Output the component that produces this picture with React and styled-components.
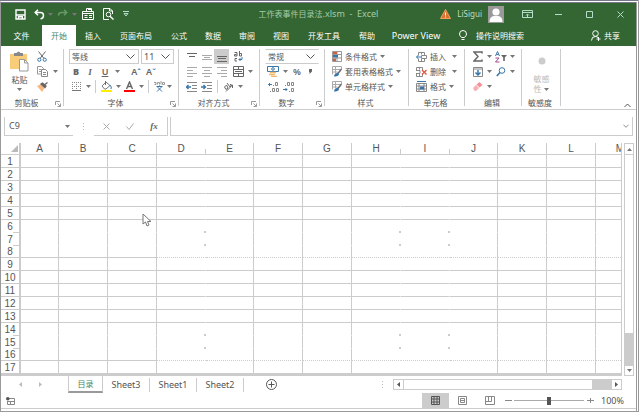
import { useState } from 'react';
import styled, { createGlobalStyle, css } from 'styled-components';

const colors = {
  green: '#336633',
  line: '#cccccc',
  lineDark: '#999999',
  text: '#555555',
  icon: '#666666',
  blue: '#3a76a8',
  orange: '#e8823c',
  white: '#ffffff',
};

const GlobalStyle = createGlobalStyle`
  * { box-sizing: border-box; }
  body {
    margin: 0;
    background: ${colors.white};
    color: ${colors.text};
    font: 8px/12px "Noto Sans", "Noto Sans CJK SC", sans-serif;
  }
  button, input, select {
    font: inherit;
    color: inherit;
    margin: 0;
    padding: 0;
    border: 0;
    background: none;
    border-radius: 0;
    outline: none;
  }
`;

const Frame = styled.div`
  position: relative;
  display: flex;
  flex-direction: column;
  min-height: 100vh;
  overflow: hidden;
  border-left: 1px solid ${colors.lineDark};
  border-right: 3px double ${colors.lineDark};
  border-bottom: 1px solid ${colors.lineDark};
  border-top: 3px double #777788;
`;

const Svg = styled.svg`
  display: block;
  flex: none;
  fill: none;
  stroke: currentColor;
  stroke-width: 1;
`;

/* ---------- title bar ---------- */

const TitleBar = styled.header`
  display: grid;
  grid-template-columns: 1fr auto 1fr;
  align-items: center;
  height: 22px;
  background: ${colors.green};
  color: ${colors.white};
`;

const QuickAccess = styled.div`
  display: flex;
  align-items: center;
  padding-left: 11px;
`;

const QuickButton = styled.button`
  display: flex;
  align-items: center;
  justify-content: center;
  width: ${(p) => p.$w || 16}px;
  height: 18px;
  margin-right: ${(p) => p.$gap || 0}px;
  color: ${(p) => (p.$dim ? '#669966' : colors.white)};
`;

const DocTitle = styled.div`
  color: #a3cca9;
  font-size: 8px;
  white-space: pre;

  span { font-size: 9px; }
`;

const WindowTools = styled.div`
  display: flex;
  align-items: center;
  justify-content: flex-end;
`;

const UserName = styled.span`
  margin: 0 6px;
  color: #c3dcc6;
  font-size: 8px;
`;

const WindowButtons = styled.div`
  display: flex;
  margin-left: 8px;
`;

const WindowButton = styled.button`
  display: flex;
  align-items: center;
  justify-content: center;
  width: 31px;
  height: 18px;
  color: #b4dcc8;
`;

/* ---------- ribbon tabs ---------- */

const TabBar = styled.nav`
  display: flex;
  height: 21px;
  background: ${colors.green};
  color: ${colors.white};
`;

const Tab = styled.button`
  width: ${(p) => p.$w || 34}px;
  height: 21px;
  line-height: 20px;
  font-size: ${(p) => (p.$latin ? 9 : 8)}px;
  text-align: center;
  white-space: nowrap;

  ${(p) => p.$active && css`
    background: ${colors.white};
    color: #448866;
  `}
`;

const TellMe = styled.label`
  display: flex;
  align-items: center;
  gap: 9px;
  flex: 1;
  padding-left: 11px;

  input {
    width: 80px;
    height: 18px;
  }
  input::placeholder { color: ${colors.white}; opacity: 1; }
`;

const Share = styled.button`
  display: flex;
  align-items: center;
  gap: 3px;
  padding-right: 16px;
`;

/* ---------- ribbon ---------- */

const Ribbon = styled.section`
  display: flex;
  height: 64px;
  border-bottom: 1px solid ${colors.line};
`;

const Group = styled.div`
  display: flex;
  flex-direction: column;
  flex: none;
  position: relative;
  width: ${(p) => p.$w}px;
  padding: 3px 0 0 ${(p) => p.$pad ?? 5}px;

  &::after {
    content: '';
    position: absolute;
    right: 0;
    top: 3px;
    bottom: 3px;
    width: 1px;
    background: ${colors.line};
  }
`;

const Row = styled.div`
  display: flex;
  align-items: center;
  height: 15px;
`;

const GroupLabel = styled.div`
  display: flex;
  align-items: center;
  height: 12px;
  margin-top: 3px;
  margin-left: -${(p) => p.$pad ?? 5}px;
  padding-right: 3px;

  span {
    flex: 1;
    text-align: center;
    padding-right: ${(p) => (p.$launcher ? 3 : 0)}px;
  }
`;

const Tool = styled.button`
  display: flex;
  align-items: center;
  justify-content: center;
  flex: none;
  width: ${(p) => p.$w || 15}px;
  height: 15px;
  margin-left: ${(p) => p.$gap || 0}px;
  color: ${(p) => (p.$pale ? '#aaaaaa' : colors.icon)};
  background: ${(p) => (p.$active ? colors.line : 'transparent')};
  font-size: 9px;
  font-weight: 600;

  i { font-family: "Liberation Serif", serif; }
  sup { color: ${colors.blue}; font-size: 8px; line-height: 4px; }
`;

const TextTool = styled.button`
  display: flex;
  align-items: center;
  align-self: flex-start;
  height: 15px;
  gap: 3px;
  min-width: ${(p) => p.$w || 0}px;
  white-space: nowrap;

  span { flex: 1; text-align: left; }
`;

const Bar = styled.i`
  width: 1px;
  height: 13px;
  margin: 0 3px;
  background: ${colors.line};
`;

const SelectWrap = styled.div`
  display: grid;
  grid-template-columns: 1fr auto;
  align-items: center;
  width: ${(p) => p.$w}px;
  height: 15px;
  margin-left: ${(p) => p.$gap || 0}px;
  padding: 0 3px 0 2px;
  border: 1px solid ${colors.line};
  ${(p) => p.$open && css`border-left-color: transparent; border-right-color: transparent;`}

  select {
    appearance: none;
    grid-area: 1 / 1 / 2 / 3;
    height: 13px;
    line-height: 13px;
    width: 100%;
    font-size: ${(p) => (p.$latin ? 9 : 8)}px;
  }
  svg { grid-area: 1 / 2; pointer-events: none; }
`;

const Clipboard = styled.div`
  display: grid;
  grid-template-columns: 27px 1fr;
  height: 45px;
`;

const BigButton = styled.button`
  display: flex;
  flex-direction: column;
  align-items: center;
  line-height: 10px;
  padding-top: ${(p) => p.$top || 0}px;
  gap: ${(p) => p.$gap || 3}px;
  height: 45px;
  color: ${(p) => (p.$dim ? '#bbbbbb' : colors.text)};
`;

const TwoLines = styled.span`
  margin-top: 6px;

  span { display: flex; align-items: center; gap: 2px; }
`;

const RibbonEnd = styled.div`
  flex: 1;
  display: flex;
  align-items: flex-end;
  justify-content: flex-end;
  padding: 0 5px 1px 0;
`;

/* ---------- formula bar ---------- */

const FormulaBar = styled.div`
  display: flex;
  align-items: stretch;
  height: 33px;
  padding: 7px 3px 7px 3px;
`;

const NameBox = styled.label`
  display: flex;
  align-items: center;
  width: 69px;
  padding: 0 3px 0 4px;
  border-left: 1px solid ${colors.line};
  border-bottom: 1px solid ${colors.line};

  input { flex: 1; min-width: 0; font-size: 9px; }
`;

const FormulaTools = styled.div`
  display: flex;
  align-items: center;
  width: 74px;
  border-right: 1px solid ${colors.line};
  border-bottom: 1px solid ${colors.line};
`;

const Dots = styled.div`
  display: flex;
  align-items: center;
  justify-content: center;
  width: 21px;
  color: #bbbbbb;
`;

const FormulaInput = styled.label`
  display: flex;
  align-items: center;
  flex: 1;
  margin-left: 2px;
  padding-right: 3px;
  border: 1px solid ${colors.line};
  border-top: 0;

  input { flex: 1; min-width: 0; }
`;

/* ---------- sheet ---------- */

const SheetArea = styled.main`
  display: flex;
  flex: 1;
`;

const GridWrap = styled.div`
  position: relative;
  flex: 1;
  min-width: 0;
  overflow: hidden;
  border-right: 1px solid ${colors.line};
  border-bottom: 3px solid ${colors.line};
`;

const Grid = styled.table`
  table-layout: fixed;
  width: 644px;
  border-collapse: separate;
  border-spacing: 0;
  font-family: "Liberation Sans", Arial, sans-serif;
  font-size: 10px;
  line-height: 11px;

  th, td { padding: 0; font-weight: 400; }
`;

/* short marks left where a grid line is not drawn */
const mark = (w, h) => css`
  background: linear-gradient(${colors.line}, ${colors.line}) right bottom / ${w}px ${h}px no-repeat border-box;
`;

const ColHead = styled.th`
  height: 12px;
  border-bottom: 1px solid ${colors.line};
  border-right: 1px solid ${(p) => (p.$open ? 'transparent' : colors.line)};
  ${(p) => p.$open && mark(1, 6)}
`;

const Corner = styled.th`
  height: 12px;
  border-bottom: 1px solid ${colors.line};
  border-right: 2px solid ${colors.line};

  svg { margin-left: auto; margin-right: 1px; }
`;

const RowHead = styled.th`
  height: ${(p) => p.$h}px;
  border-right: 2px solid ${colors.line};
  border-bottom: ${(p) => (p.$last ? 0 : 1)}px solid ${(p) => (p.$open ? 'transparent' : colors.line)};
  ${(p) => p.$open && mark(8, 1)}
`;

const Cell = styled.td`
  height: ${(p) => p.$h}px;
  border-right: 1px solid ${(p) => (p.$openX ? 'transparent' : colors.line)};
  border-bottom: ${(p) => (p.$last ? 0 : 1)}px
    ${(p) => (p.$dotted ? 'dotted' : 'solid')}
    ${(p) => (p.$openY ? 'transparent' : colors.line)};
  ${(p) => p.$openX && p.$openY && mark(2, 2)}
`;

const Pointer = styled(Svg)`
  position: absolute;
  left: 141px;
  top: 70px;
`;

const VScroll = styled.div`
  display: flex;
  flex-direction: column;
  width: 10px;
  margin: 0 2px;
  border: 1px solid ${colors.line};
`;

const ScrollButton = styled.button`
  display: flex;
  align-items: center;
  justify-content: center;
  width: ${(p) => p.$w || 8}px;
  height: ${(p) => p.$h || 9}px;
  border: 0 solid ${colors.line};
  border-width: ${(p) => p.$edge};
`;

const Track = styled.div`
  flex: 1;
`;

const Thumb = styled.div`
  width: ${(p) => p.$w}px;
  height: ${(p) => p.$h}px;
  background: ${colors.line};
`;

/* ---------- sheet tabs ---------- */

const SheetBar = styled.div`
  display: flex;
  align-items: center;
  height: 17px;
  padding-right: 14px;
`;

const SheetNav = styled.button`
  display: flex;
  justify-content: center;
  width: 20px;
  margin-left: ${(p) => p.$gap || 0}px;
  color: #bbbbbb;
`;

const SheetTab = styled.button`
  width: 47px;
  height: 14px;
  border-right: 1px solid ${colors.line};
  font-size: 9px;

  ${(p) => p.$active && css`
    width: 35px;
    height: 17px;
    margin-left: 18px;
    border-left: 1px solid ${colors.line};
    border-bottom: 2px solid ${colors.lineDark};
    color: #448866;
    font-size: 8px;
  `}
`;

const AddSheet = styled.button`
  margin-left: 22px;
`;

const HScroll = styled.div`
  display: flex;
  width: 229px;
  height: 11px;
  border: 1px solid ${colors.line};
`;

/* ---------- status bar ---------- */

const StatusBar = styled.footer`
  display: flex;
  align-items: center;
  height: 16px;
  margin-bottom: 2px;
  padding: 0 12px 0 5px;
  border-bottom: 1px solid ${colors.line};
`;

const Spacer = styled.div`
  flex: 1;
`;

const ViewButton = styled.button`
  display: flex;
  align-items: center;
  justify-content: center;
  width: 27px;
  height: 15px;
  background: ${(p) => (p.$active ? colors.line : 'transparent')};
`;

const ZoomStep = styled.button`
  width: 10px;
  height: 12px;
  display: flex;
  align-items: center;
  justify-content: center;
  color: #888888;
`;

const ZoomRange = styled.input`
  appearance: none;
  width: 70px;
  height: 9px;
  margin: 0 1px;
  background: linear-gradient(#aaaaaa, #aaaaaa) center / 100% 1px no-repeat;

  &::-webkit-slider-thumb {
    appearance: none;
    width: 4px;
    height: 8px;
    background: ${colors.text};
  }
`;

const ZoomValue = styled.output`
  width: 29px;
  text-align: right;
  font-size: 9px;
`;

/* ---------- icons ---------- */

const Caret = ({ up }) => (
  <Svg width="5" height="3" viewBox="0 0 5 3">
    <path d={up ? 'M0 3h5L2.5 0z' : 'M0 0h5L2.5 3z'} fill="#777" stroke="none" />
  </Svg>
);

const DropCaret = ({ w = 8, label }) => (
  <Tool type="button" $w={w} aria-label={label}>
    <Caret />
  </Tool>
);

const Chevron = ({ size = 9 }) => (
  <Svg width={size} height={size} viewBox="0 0 9 9"><path d="M.5 2.5l4 4 4-4" /></Svg>
);

const Launcher = () => (
  <Svg width="6" height="7" viewBox="0 0 6 7">
    <path d="M.5 5V1.500H5M2.500 3.500l3 3M5.500 3.500v3h-3" stroke="#999" />
  </Svg>
);

const SaveIcon = () => (
  <Svg width="11" height="11" viewBox="0 0 11 11">
    <path d="M1 1h9v9H1zM1 6h9M3.500 10V7.800h3.800V10" strokeWidth="1.400" />
  </Svg>
);

const UndoIcon = ({ flip }) => (
  <Svg width="11" height="11" viewBox="0 0 11 11">
    <path
      strokeWidth="1.500"
      d={flip ? 'M7 .8l2.800 2.700L7 6.200M9.500 3.500H4.500Q1.500 3.500 1.500 6.500'
        : 'M4 .8L1.200 3.500 4 6.200M1.500 3.500h5Q9.500 3.500 9.500 6.500T6.500 9.800'}
    />
  </Svg>
);

const FormIcon = () => (
  <Svg width="12" height="12" viewBox="0 0 12 12">
    <path d="M.5 3.500h11v8H.500zM.5 5.500h11M2.500 7.500h3M7 7.500h3M2.500 9.500h3M7 9.500h3M4.500 3V.500h5V3M6 1.500h3" />
  </Svg>
);

const PreviewIcon = () => (
  <Svg width="11" height="12" viewBox="0 0 11 12">
    <path d="M9.500 6V3L7 .500H.500v11H6M6.500.5V3h3" />
    <circle cx="5.500" cy="6.500" r="2.300" />
    <path d="M7 8.200l3.500 3.300" strokeWidth="1.500" />
  </Svg>
);

const WarningIcon = () => (
  <Svg width="11" height="10" viewBox="0 0 11 10">
    <path d="M5.500.5l5 9H.500z" fill="#d9732e" stroke="#f0a060" />
    <path d="M5.500 3.500v3M5.500 7.500v1" stroke="#fff" />
  </Svg>
);

const Avatar = () => (
  <Svg width="16" height="17" viewBox="0 0 16 17">
    <path d="M0 0h16v17H0z" fill="#999" stroke="none" />
    <circle cx="8" cy="6" r="3.600" fill="#fff" stroke="none" />
    <path d="M1.500 16q0-5.500 4.500-6h4q4.500.5 4.500 6z" fill="#fff" stroke="none" />
  </Svg>
);

const PasteIcon = () => (
  <Svg width="19" height="21" viewBox="0 0 19 21">
    <path d="M0 3h17v15H0z" fill="#f9cc7a" stroke="none" />
    <path d="M4 2h2.500Q8.500-1 10.500 2H13v3H4z" fill="#888" stroke="none" />
    <path d="M9.500 8.500h5l3.500 3.500v8H9.500z" fill="#fff" stroke="#999" />
    <path d="M14.500 8.500V12H18" stroke="#999" />
  </Svg>
);

const CutIcon = () => (
  <Svg width="10" height="11" viewBox="0 0 10 11">
    <path d="M1.500.5l5.500 7M8.500.5L3 7.500" stroke="#666" />
    <circle cx="2.300" cy="8.700" r="1.600" stroke={colors.blue} />
    <circle cx="7.700" cy="8.700" r="1.600" stroke={colors.blue} />
  </Svg>
);

const CopyIcon = () => (
  <Svg width="11" height="11" viewBox="0 0 11 11">
    <path d="M.5.5h4l2 2v5.500h-6zM2 3.500h2M2 5.500h2" stroke="#999" />
    <path d="M4.500 3.500h4l2 2v5h-6z" fill="#fff" stroke="#888" />
    <path d="M6 6.500h3M6 8.500h3" stroke="#888" />
  </Svg>
);

const PainterIcon = () => (
  <Svg width="11" height="10" viewBox="0 0 11 10">
    <path d="M0 4l4-2 4 3.500-3 4.500z" fill="#f7b980" stroke="none" />
    <path d="M4 2l1.500-1 3.500 3-1 1.500zM8 2.500L10.500.500" fill="#666" strokeWidth="1.300" />
  </Svg>
);

const BordersIcon = () => (
  <Svg width="9" height="9" viewBox="0 0 9 9">
    <path d="M0 .5h9M.5 0v8M8.500 0v8M4.500 0v8M0 4.500h9" strokeDasharray="1 1" stroke="#888" />
    <path d="M0 8.500h9" stroke="#777" />
  </Svg>
);

const FillIcon = () => (
  <Svg width="11" height="11" viewBox="0 0 11 11">
    <path d="M1 5l4-4 4 3.500-4 3.500H3.500z" fill="#fff" stroke="#777" />
    <path d="M4.500 0v4M9 4q2 2 1 4" stroke={colors.blue} />
    <path d="M0 9h11v2H0z" fill="#ffee00" stroke="none" />
  </Svg>
);

const FontColorIcon = () => (
  <Svg width="11" height="11" viewBox="0 0 11 11">
    <path d="M2.500 8l3-7 3 7M3.500 5.500h4" strokeWidth="1.400" />
    <path d="M0 9h11v2H0z" fill="#ff0000" stroke="none" />
  </Svg>
);

const PhoneticIcon = () => (
  <Svg width="11" height="11" viewBox="0 0 11 11">
    <path d="M0 1.500h2v2H.500M3.500 3.500v-2h2v2M7 0v3.500M8.500 1.500h2v2h-2z" stroke="#999" />
    <path d="M2.500 5.500h6M5.500 4.500v1M3.500 6l4.500 4.500M7.500 6L3 10.500" stroke={colors.blue} />
  </Svg>
);

const LinesIcon = ({ d }) => (
  <Svg width="10" height="10" viewBox="0 0 10 10"><path d={d} /></Svg>
);

const WrapIcon = () => (
  <Svg width="9" height="11" viewBox="0 0 9 11">
    <path d="M.5 1.500h2.500v3.500h-2.500V3.500h2M5.500 0v5h2V2.500h-2M3 7.500H1v2.500h2" />
    <path d="M8 6v2.500H5M6.500 7L5 8.500 6.500 10" stroke={colors.blue} />
  </Svg>
);

const MergeIcon = () => (
  <Svg width="11" height="11" viewBox="0 0 11 11">
    <path d="M.5.5h10v10H.500zM.5 3.500h10M.5 7.500h10M5.500.5v3M5.500 7.500v3M2 5.500h7" />
  </Svg>
);

const IndentIcon = ({ right }) => (
  <Svg width="11" height="10" viewBox="0 0 11 10">
    <path d="M1 .5h10M6 3.500h5M6 6.500h5M1 9.500h10" stroke="#888" />
    <path d={right ? 'M0 5h4M2.500 3l2 2-2 2' : 'M5 5H1M2.500 3l-2 2 2 2'} stroke={colors.blue} strokeWidth="1.400" />
  </Svg>
);

const OrientIcon = () => (
  <Svg width="11" height="10" viewBox="0 0 11 10">
    <path d="M1.500 5l2-2 1.500 3-2 1.500zM4 1l3 4 1.500-1.500L7 2M3 9.500L9.500 3M9.500 6V3H7" />
  </Svg>
);

const CurrencyIcon = () => (
  <Svg width="12" height="11" viewBox="0 0 12 11">
    <path d="M.5.5h11v5H.500z" stroke={colors.blue} />
    <circle cx="6" cy="3" r="1.300" stroke={colors.blue} />
    <path d="M3 6.500h6M2 8.500h6M4 10.500h6" stroke="#f3b76c" strokeWidth="1.500" />
  </Svg>
);

const DecimalIcon = ({ dec }) => (
  <Svg width="11" height="10" viewBox="0 0 11 10">
    <path
      d={dec ? 'M4.500.5h2v3h-2zM8.500.5h2v3h-2zM2 3.500h1M8.500 6.500h2v3h-2zM6 9.500h1'
        : 'M7.500.5h2v3h-2zM5 3.500h1M4.500 6.500h2v3h-2zM8.500 6.500h2v3h-2zM2 9.500h1'}
      stroke="#888"
    />
    <path d={dec ? 'M0 7.500h4M2.500 6L4 7.500 2.500 9' : 'M4 2.500H.500M2 1L.500 2.500 2 4'} stroke={colors.blue} />
  </Svg>
);

const CondIcon = () => (
  <Svg width="10" height="11" viewBox="0 0 10 11">
    <path d="M.5.5h9v10h-9zM.5 3.500h9M.5 7h9M5 .5v10" stroke="#999" />
    <path d="M1 1h4v2H1zM1 7.500h3v2.500H1z" fill="#d06040" stroke="none" />
    <path d="M1 4h5v2.500H1z" fill={colors.blue} stroke="none" />
  </Svg>
);

const StyleIcon = () => (
  <Svg width="10" height="11" viewBox="0 0 10 11">
    <path d="M.5 8.500v-8h9V3M.5 3.500H8M.5 6h5M3.500.5v7" stroke="#aaa" />
    <path d="M9.500 3L6 7.500" stroke="#666" strokeWidth="1.500" />
    <path d="M2 10.500q0-3 4-4l1 2q-1 2-5 2z" fill={colors.blue} stroke="none" />
  </Svg>
);

const InsertIcon = () => (
  <Svg width="11" height="10" viewBox="0 0 11 10">
    <path d="M2.500 3V.500h6V3M2.500 7v2.500h6V7M5.500.5v2M5.500 7v2.500M5.500 3.500h5v3h-5z" stroke="#888" />
    <path d="M5 5H.500M2.500 3l-2 2 2 2" stroke={colors.blue} />
  </Svg>
);

const DeleteIcon = () => (
  <Svg width="11" height="10" viewBox="0 0 11 10">
    <path d="M.5 3V.500h6V3M.5 7v2.500h6V7M3.500.5v2M3.500 7v2.500M0 3.500h4v3H0" stroke="#888" />
    <path d="M6 3l4.500 4.500M10.500 3L6 7.500" stroke="#dd5544" strokeWidth="1.400" />
  </Svg>
);

const FormatIcon = () => (
  <Svg width="11" height="11" viewBox="0 0 11 11">
    <path d="M.5 2.500h10v8H.500zM3 2.500v8M8 2.500v8M.5 5h10M.5 8h10" stroke="#888" />
    <path d="M1 .5h9" stroke={colors.blue} />
    <path d="M4 5.500h4v3H4z" fill={colors.blue} stroke="none" />
  </Svg>
);

const SumIcon = () => (
  <Svg width="10" height="11" viewBox="0 0 10 11">
    <path d="M9 2.500V1H1l4 4.500L1 10h8V8.500" strokeWidth="1.500" />
  </Svg>
);

const SortIcon = () => (
  <Svg width="12" height="12" viewBox="0 0 12 12">
    <path d="M.5 5L2.500.500 4.500 5M1.500 3.500h2" stroke={colors.blue} />
    <path d="M.5 7h3.500l-3.500 4H4.500" stroke="#a04c90" />
    <path d="M6 4h6L9.800 6.500V10H8.200V6.500z" fill="#666" stroke="none" />
  </Svg>
);

const FillDownIcon = () => (
  <Svg width="10" height="10" viewBox="0 0 10 10">
    <path d="M.5.5h9v9h-9zM.5 2h9" stroke="#888" />
    <path d="M5 3v5M2.500 5.500L5 8l2.500-2.500" stroke={colors.blue} strokeWidth="1.500" />
  </Svg>
);

const FindIcon = () => (
  <Svg width="10" height="10" viewBox="0 0 10 10">
    <circle cx="6" cy="3.500" r="2.800" stroke={colors.blue} />
    <path d="M4 5.500L.8 9" stroke={colors.blue} strokeWidth="1.600" />
  </Svg>
);

const EraserIcon = () => (
  <Svg width="10" height="9" viewBox="0 0 10 9">
    <path d="M0 6l3-3 3 3-3 3H1.500z" fill="#f9b0b4" stroke="none" />
    <path d="M3.500 2.500L6.500 0 9.500 3 6.500 5.500z" fill="#f79096" stroke="none" />
  </Svg>
);

const Triangle = ({ right }) => (
  <Svg width="3" height="5" viewBox="0 0 3 5">
    <path d={right ? 'M0 0v5l3-2.500z' : 'M3 0v5L0 2.500z'} fill="currentColor" stroke="none" />
  </Svg>
);

/* ---------- data ---------- */

const tabs = [
  { label: '文件', w: 41 },
  { label: '开始' },
  { label: '插入' },
  { label: '页面布局', w: 52 },
  { label: '公式' },
  { label: '数据' },
  { label: '审阅' },
  { label: '视图' },
  { label: '开发工具', w: 52 },
  { label: '帮助' },
  { label: 'Power View', w: 64, latin: true },
];

const columns = [
  { name: 'A', w: 38 },
  { name: 'B', w: 49 },
  { name: 'C', w: 49 },
  { name: 'D', w: 49, open: true },
  { name: 'E', w: 48 },
  { name: 'F', w: 49 },
  { name: 'G', w: 49 },
  { name: 'H', w: 49, open: true },
  { name: 'I', w: 49, open: true },
  { name: 'J', w: 48 },
  { name: 'K', w: 49 },
  { name: 'L', w: 49 },
  { name: 'M', w: 49 },
];

const rows = Array.from({ length: 17 }, (_, i) => i + 1).map((n) => ({
  n,
  h: [8, 16, 17].includes(n) ? 12 : 13,
  open: [6, 7, 14, 15].includes(n),
  dotted: n === 8 || n === 16,
  last: n === 17,
}));

const sheets = ['目录', 'Sheet3', 'Sheet1', 'Sheet2'];

const alignTop = [
  { label: '顶端对齐', d: 'M0 1.500h10M2 4.500h6' },
  { label: '垂直居中', d: 'M0 3.500h10M2 5.500h6M0 7.500h10', pale: true },
  { label: '底端对齐', d: 'M0 4.500h10M1 6.500h8M0 9.500h10' },
];

const alignSide = [
  { label: '左对齐', d: 'M0 .5h10M0 3.500h6M0 6.500h10M0 9.500h6' },
  { label: '居中', d: 'M0 .5h10M2 3.500h6M0 6.500h10M2 9.500h6' },
  { label: '右对齐', d: 'M0 .5h10M4 3.500h6M0 6.500h10M4 9.500h6' },
];

function Label({ children, pad, launcher }) {
  return (
    <GroupLabel $pad={pad} $launcher={launcher}>
      <span>{children}</span>
      {launcher ? <Launcher /> : null}
    </GroupLabel>
  );
}

export default function App() {
  const [tab, setTab] = useState('开始');
  const [sheet, setSheet] = useState('目录');
  const [zoom, setZoom] = useState(100);

  return (
    <>
      <GlobalStyle />
      <Frame>
        <TitleBar>
          <QuickAccess>
            <QuickButton $w={17} $gap={2} aria-label="保存"><SaveIcon /></QuickButton>
            <QuickButton aria-label="撤消"><UndoIcon /></QuickButton>
            <QuickButton $w={7} aria-label="撤消列表"><Caret /></QuickButton>
            <QuickButton $dim $gap={1} aria-label="恢复"><UndoIcon flip /></QuickButton>
            <QuickButton $w={7} $dim $gap={1} aria-label="恢复列表"><Caret /></QuickButton>
            <QuickButton $w={17} $gap={4} aria-label="表单"><FormIcon /></QuickButton>
            <QuickButton $w={17} $gap={5} aria-label="打印预览"><PreviewIcon /></QuickButton>
            <QuickButton $w={7} aria-label="自定义">
              <Svg width="6" height="6" viewBox="0 0 6 6"><path d="M0 .5h6M1 2.500h4L3 5z" stroke="#b4dcc8" /></Svg>
            </QuickButton>
          </QuickAccess>
          <DocTitle>工作表事件目录法<span>.xlsm  -  Excel</span></DocTitle>
          <WindowTools>
            <WarningIcon />
            <UserName>LiSigui</UserName>
            <Avatar />
            <WindowButtons>
              <WindowButton aria-label="功能区显示选项">
                <Svg width="11" height="8" viewBox="0 0 11 8"><path d="M.5.5h10v7H.500zM.5 2.500h10M5.500 7V4M4 5.500L5.500 4 7 5.500" /></Svg>
              </WindowButton>
              <WindowButton aria-label="最小化">
                <Svg width="7" height="7" viewBox="0 0 7 7"><path d="M0 3.500h7" /></Svg>
              </WindowButton>
              <WindowButton aria-label="最大化">
                <Svg width="7" height="7" viewBox="0 0 7 7"><path d="M.5.5h6v6h-6z" /></Svg>
              </WindowButton>
              <WindowButton aria-label="关闭">
                <Svg width="7" height="7" viewBox="0 0 7 7"><path d="M.5.5l6 6M6.500.5l-6 6" /></Svg>
              </WindowButton>
            </WindowButtons>
          </WindowTools>
        </TitleBar>

        <TabBar>
          {tabs.map((t) => (
            <Tab key={t.label} type="button" $w={t.w} $latin={t.latin} $active={t.label === tab} onClick={() => setTab(t.label)}>
              {t.label}
            </Tab>
          ))}
          <TellMe>
            <Svg width="8" height="11" viewBox="0 0 8 11">
              <path d="M2.500 7.500Q.500 5.500.500 4a3.500 3.500 0 0 1 7 0Q7.500 5.500 5.500 7.500zM2.500 9.500h3" />
            </Svg>
            <input type="text" placeholder="操作说明搜索" aria-label="操作说明搜索" />
          </TellMe>
          <Share type="button">
            <Svg width="10" height="11" viewBox="0 0 10 11">
              <circle cx="4.500" cy="3.500" r="2.800" />
              <path d="M.5 10.500q0-4 4-4 1.500 0 2.500 1M5.500 9h4M7.500 7v4" />
            </Svg>
            共享
          </Share>
        </TabBar>

        <Ribbon>
          <Group $w={63}>
            <Clipboard>
              <BigButton type="button" $top={2}>
                <PasteIcon />
                粘贴
                <Caret />
              </BigButton>
              <div>
                <Row><Tool aria-label="剪切" $w={18}><CutIcon /></Tool></Row>
                <Row><Tool aria-label="复制" $w={18}><CopyIcon /></Tool><DropCaret label="复制选项" /></Row>
                <Row><Tool aria-label="格式刷" $w={18}><PainterIcon /></Tool></Row>
              </div>
            </Clipboard>
            <Label launcher>剪贴板</Label>
          </Group>

          <Group $w={115}>
            <Row>
              <SelectWrap $w={70}>
                <select aria-label="字体"><option>等线</option></select>
                <Chevron />
              </SelectWrap>
              <SelectWrap $w={33} $gap={2} $latin>
                <select aria-label="字号"><option>11</option></select>
                <Chevron />
              </SelectWrap>
            </Row>
            <Row>
              <Tool type="button" $w={14}><b>B</b></Tool>
              <Tool type="button" $w={14}><i>I</i></Tool>
              <Tool type="button" $w={16}><u>U</u></Tool>
              <DropCaret label="下划线选项" />
              <Tool type="button" $w={16} $gap={7}>A<sup>ˆ</sup></Tool>
              <Tool type="button" $w={14}>A<sup>ˇ</sup></Tool>
            </Row>
            <Row>
              <Tool aria-label="边框"><BordersIcon /></Tool>
              <DropCaret label="边框选项" />
              <Bar />
              <Tool aria-label="填充颜色"><FillIcon /></Tool>
              <DropCaret label="填充选项" />
              <Tool aria-label="字体颜色"><FontColorIcon /></Tool>
              <DropCaret label="颜色选项" />
              <Bar />
              <Tool aria-label="拼音"><PhoneticIcon /></Tool>
              <DropCaret w={5} label="拼音选项" />
            </Row>
            <Label launcher>字体</Label>
          </Group>

          <Group $w={81}>
            <Row>
              {alignTop.map((a, i) => (
                <Tool key={a.label} aria-label={a.label} $pale={a.pale} $active={i === 2}><LinesIcon d={a.d} /></Tool>
              ))}
              <Tool aria-label="自动换行" $gap={2}><WrapIcon /></Tool>
            </Row>
            <Row>
              {alignSide.map((a) => (
                <Tool key={a.label} aria-label={a.label} $pale><LinesIcon d={a.d} /></Tool>
              ))}
              <Tool aria-label="合并后居中" $gap={2}><MergeIcon /></Tool>
              <DropCaret label="合并选项" />
            </Row>
            <Row>
              <Tool aria-label="减少缩进"><IndentIcon /></Tool>
              <Tool aria-label="增加缩进"><IndentIcon right /></Tool>
              <Bar />
              <Tool aria-label="方向"><OrientIcon /></Tool>
              <DropCaret label="方向选项" />
            </Row>
            <Label launcher>对齐方式</Label>
          </Group>

          <Group $w={65}>
            <Row>
              <SelectWrap $w={54} $open>
                <select aria-label="数字格式"><option>常规</option></select>
                <Chevron />
              </SelectWrap>
            </Row>
            <Row>
              <Tool aria-label="会计数字格式" $w={16}><CurrencyIcon /></Tool>
              <DropCaret label="货币选项" />
              <Tool type="button" $w={16}>%</Tool>
              <Tool type="button" $w={10} aria-label="千位分隔样式">
                <Svg width="4" height="5" viewBox="0 0 4 5"><path d="M1 0h3v2.500L1.500 5V3H1z" fill="#666" stroke="none" /></Svg>
              </Tool>
            </Row>
            <Row>
              <Tool aria-label="增加小数位数" $w={16}><DecimalIcon /></Tool>
              <Tool aria-label="减少小数位数"><DecimalIcon dec /></Tool>
            </Row>
            <Label launcher>数字</Label>
          </Group>

          <Group $w={84} $pad={7}>
            <TextTool type="button"><CondIcon /><span>条件格式</span><Caret /></TextTool>
            <TextTool type="button"><StyleIcon /><span>套用表格格式</span><Caret /></TextTool>
            <TextTool type="button"><StyleIcon /><span>单元格样式</span><Caret /></TextTool>
            <Label pad={7}>样式</Label>
          </Group>

          <Group $w={56} $pad={7}>
            <TextTool type="button" $w={41}><InsertIcon /><span>插入</span><Caret /></TextTool>
            <TextTool type="button" $w={41}><DeleteIcon /><span>删除</span><Caret /></TextTool>
            <TextTool type="button"><FormatIcon /><span>格式</span><Caret /></TextTool>
            <Label pad={7}>单元格</Label>
          </Group>

          <Group $w={57}>
            <Row>
              <Tool aria-label="自动求和"><SumIcon /></Tool>
              <DropCaret label="求和选项" />
              <Tool aria-label="排序和筛选"><SortIcon /></Tool>
              <DropCaret label="排序选项" />
            </Row>
            <Row>
              <Tool aria-label="填充"><FillDownIcon /></Tool>
              <DropCaret label="填充方式" />
              <Tool aria-label="查找"><FindIcon /></Tool>
              <DropCaret label="查找选项" />
            </Row>
            <Row>
              <Tool aria-label="清除"><EraserIcon /></Tool>
              <DropCaret label="清除选项" />
            </Row>
            <Label>编辑</Label>
          </Group>

          <Group $w={39} $pad={0}>
            <BigButton type="button" $dim $top={8}>
              <Svg width="8" height="8" viewBox="0 0 8 8"><circle cx="4" cy="4" r="3.500" fill="#ccc" stroke="none" /></Svg>
              <TwoLines>
                <span>敏感</span>
                <span>性 <Caret /></span>
              </TwoLines>
            </BigButton>
            <Label pad={0}>敏感度</Label>
          </Group>

          <RibbonEnd>
            <button type="button" aria-label="折叠功能区">
              <Svg width="7" height="5" viewBox="0 0 7 5"><path d="M.5 4l3-3 3 3" /></Svg>
            </button>
          </RibbonEnd>
        </Ribbon>

        <FormulaBar>
          <NameBox>
            <input type="text" defaultValue="C9" aria-label="名称框" />
            <Caret />
          </NameBox>
          <Dots>
            <Svg width="1" height="7" viewBox="0 0 1 7"><path d="M.5 0v7" strokeDasharray="1 2" /></Svg>
          </Dots>
          <FormulaTools>
            <Tool aria-label="取消" $w={24} $pale>
              <Svg width="7" height="7" viewBox="0 0 7 7"><path d="M.5.5l6 6M6.500.5l-6 6" /></Svg>
            </Tool>
            <Tool aria-label="输入" $w={24} $pale>
              <Svg width="8" height="7" viewBox="0 0 8 7"><path d="M.5 3.500l2.500 3L7.500.500" /></Svg>
            </Tool>
            <Tool type="button" $w={24}><i>fx</i></Tool>
          </FormulaTools>
          <FormulaInput>
            <input type="text" aria-label="编辑栏" />
            <Chevron size={6} />
          </FormulaInput>
        </FormulaBar>

        <SheetArea>
          <GridWrap>
            <Grid>
              <colgroup>
                <col width="20" />
                {columns.map((c) => <col key={c.name} width={c.w} />)}
              </colgroup>
              <thead>
                <tr>
                  <Corner aria-label="全选">
                    <Svg width="7" height="7" viewBox="0 0 7 7"><path d="M7 0v7H0z" fill="#bbb" stroke="none" /></Svg>
                  </Corner>
                  {columns.map((c) => <ColHead key={c.name} $open={c.open}>{c.name}</ColHead>)}
                </tr>
              </thead>
              <tbody>
                {rows.map((r) => (
                  <tr key={r.n}>
                    <RowHead $h={r.h} $open={r.open} $last={r.last}>{r.n}</RowHead>
                    {columns.map((c, i) => (
                      <Cell
                        key={c.name}
                        $h={r.h}
                        $last={r.last}
                        $openX={c.open}
                        $openY={r.open}
                        $dotted={r.dotted && i > 2}
                      />
                    ))}
                  </tr>
                ))}
              </tbody>
            </Grid>
            <Pointer width="10" height="14" viewBox="0 0 10 14">
              <path d="M1 1v10l2.500-2 1.500 4 2-1-1.500-3.500H9z" fill="#fff" stroke="#777" />
            </Pointer>
          </GridWrap>
          <VScroll>
            <ScrollButton $h={11} $edge="0 0 1px" aria-label="向上滚动"><Caret up /></ScrollButton>
            <Track />
            <Thumb $w={8} $h={32} />
            <ScrollButton $h={10} $edge="1px 0 0" aria-label="向下滚动"><Caret /></ScrollButton>
          </VScroll>
        </SheetArea>

        <SheetBar>
          <SheetNav $gap={9} aria-label="上一个工作表"><Triangle /></SheetNav>
          <SheetNav aria-label="下一个工作表"><Triangle right /></SheetNav>
          {sheets.map((s) => (
            <SheetTab key={s} type="button" $active={s === sheet} onClick={() => setSheet(s)}>{s}</SheetTab>
          ))}
          <AddSheet aria-label="新工作表">
            <Svg width="11" height="11" viewBox="0 0 11 11"><circle cx="5.500" cy="5.500" r="5" /><path d="M5.500 2.500v6M2.500 5.500h6" /></Svg>
          </AddSheet>
          <Spacer />
          <Dots>
            <Svg width="1" height="7" viewBox="0 0 1 7"><path d="M.5 0v7" strokeDasharray="1 2" /></Svg>
          </Dots>
          <HScroll>
            <ScrollButton $w={10} $edge="0 1px 0 0" aria-label="向左滚动"><Triangle /></ScrollButton>
            <Track />
            <Thumb $w={20} $h={9} />
            <ScrollButton $w={9} $edge="0" aria-label="向右滚动"><Triangle right /></ScrollButton>
          </HScroll>
        </SheetBar>

        <StatusBar>
          <button type="button" aria-label="录制宏">
            <Svg width="9" height="8" viewBox="0 0 9 8">
              <path d="M3 1.500h5.500v6h-7V4M2 4.500h6M4.500 4v3" stroke="#888" />
              <circle cx="1.800" cy="1.800" r="1.800" fill="#555" stroke="none" />
            </Svg>
          </button>
          <Spacer />
          <ViewButton $active aria-label="普通">
            <Svg width="9" height="9" viewBox="0 0 9 9"><path d="M.5.5h8v8h-8zM.5 3h8M.5 6h8M3 .5v8M6 .5v8" /></Svg>
          </ViewButton>
          <ViewButton aria-label="页面布局">
            <Svg width="9" height="9" viewBox="0 0 9 9"><path d="M.5.5h8v8h-8zM2.500 2.500h4v4h-4zM3 4.500h3" stroke="#888" /></Svg>
          </ViewButton>
          <ViewButton aria-label="分页预览">
            <Svg width="10" height="9" viewBox="0 0 10 9"><path d="M.5.5h9v8h-9zM3.500.5v5M6.500.5v5M.5 5.500h6" stroke="#888" /></Svg>
          </ViewButton>
          <ZoomStep aria-label="缩小" onClick={() => setZoom(Math.max(10, zoom - 10))}>
            <Svg width="7" height="7" viewBox="0 0 7 7"><path d="M0 3.500h7" /></Svg>
          </ZoomStep>
          <ZoomRange
            type="range"
            min="0"
            max="200"
            value={zoom}
            aria-label="缩放"
            onChange={(e) => setZoom(Number(e.target.value))}
          />
          <ZoomStep aria-label="放大" onClick={() => setZoom(Math.min(200, zoom + 10))}>
            <Svg width="7" height="7" viewBox="0 0 7 7"><path d="M0 3.500h7M3.500 1v5" /></Svg>
          </ZoomStep>
          <ZoomValue>{zoom}%</ZoomValue>
        </StatusBar>
      </Frame>
    </>
  );
}
